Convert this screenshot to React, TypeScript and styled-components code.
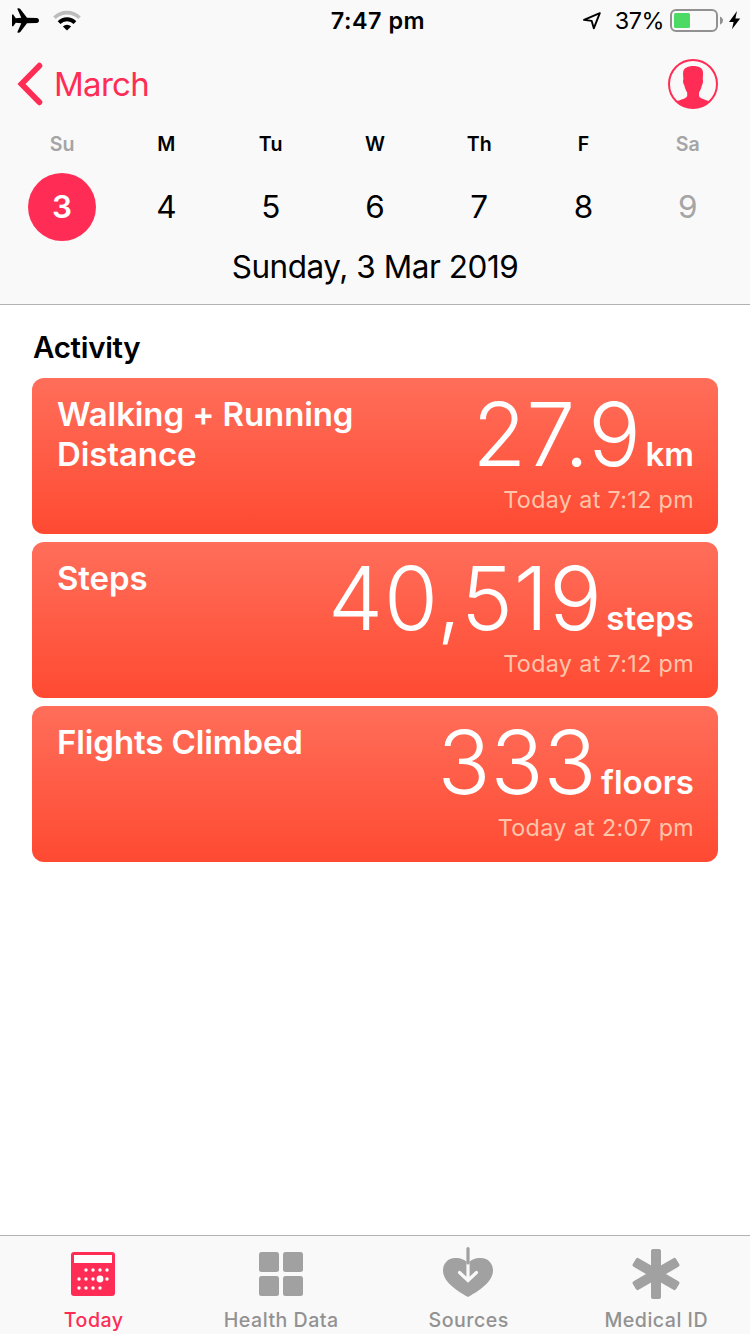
import React from "react";
import styled, { createGlobalStyle } from "styled-components";

const PINK = "#ff2d55";
const GREY = "#a1a1a1";

const GlobalStyle = createGlobalStyle`
  * { box-sizing: border-box; }
  body { margin: 0; background: #fff; }
  svg { display: block; flex: none; }
`;

const Screen = styled.div`
  width: 750px;
  height: 1334px;
  display: flex;
  flex-direction: column;
  overflow: hidden;
  background: #fff;
  color: #000;
  font-family: Inter, "Liberation Sans", sans-serif;
  white-space: nowrap;
`;

const Header = styled.header`
  height: 305px;
  flex: none;
  display: flex;
  flex-direction: column;
  background: #f9f9f9;
  border-bottom: 1px solid #b2b2b2;
`;

const StatusBar = styled.div`
  height: 40px;
  display: grid;
  grid-template-columns: 1fr auto 1fr;
  align-items: center;
`;

const StatusLeft = styled.div`
  display: flex;
  align-items: center;
  gap: 13px;
  padding-left: 12px;
`;

const Clock = styled.div`
  font-size: 23.4px;
  font-weight: 600;
  line-height: 40px;
  letter-spacing: 0.5px;
  padding: 1px 0 0 6px;
`;

const StatusRight = styled.div`
  display: flex;
  justify-content: flex-end;
  align-items: center;
  padding-right: 9px;
`;

const Percent = styled.span`
  font-size: 23.4px;
  line-height: 40px;
  letter-spacing: -0.5px;
  margin: 1px 6px 0 13px;
`;

const NavBar = styled.div`
  height: 88px;
  display: flex;
  align-items: center;
  justify-content: space-between;
  padding: 0 32px 0 16px;
`;

const BackButton = styled.button`
  display: flex;
  align-items: center;
  gap: 10px;
  padding: 0;
  border: 0;
  background: none;
  color: ${PINK};
  font: 400 33px/44px Inter, "Liberation Sans", sans-serif;
  letter-spacing: -0.7px;
`;

const Week = styled.div`
  display: grid;
  grid-template-columns: repeat(7, 1fr);
  padding: 0 10px;
`;

const Day = styled.div<{ $muted?: boolean }>`
  display: flex;
  flex-direction: column;
  align-items: center;
  color: ${(p) => (p.$muted ? "#a5a5a5" : "#000")};
`;

const DayName = styled.span`
  font-size: 19.6px;
  font-weight: 600;
  line-height: 33px;
  letter-spacing: 0.1px;
  margin-bottom: 12px;
`;

const DayNumber = styled.span<{ $selected?: boolean }>`
  width: 68px;
  height: 68px;
  border-radius: 50%;
  text-align: center;
  font-size: 31.5px;
  line-height: 68px;
  font-weight: ${(p) => (p.$selected ? 600 : 400)};
  color: ${(p) => (p.$selected ? "#fff" : "inherit")};
  background: ${(p) => (p.$selected ? PINK : "transparent")};
`;

const FullDate = styled.div`
  text-align: center;
  font-size: 31.5px;
  line-height: 40px;
  letter-spacing: -0.45px;
  margin-top: 6px;
`;

const Content = styled.main`
  flex: 1;
  padding: 22px 32px 0;
`;

const SectionTitle = styled.h2`
  margin: 0 0 11px 1px;
  font-size: 29.5px;
  font-weight: 600;
  line-height: 40px;
  letter-spacing: -0.3px;
`;

const CardList = styled.div`
  display: flex;
  flex-direction: column;
  gap: 8px;
`;

const Card = styled.article`
  height: 156px;
  border-radius: 12px;
  padding: 16px 24px 0 25px;
  display: flex;
  justify-content: space-between;
  color: #fff;
  background: linear-gradient(#ff6e5a, #ff4a32);
`;

const CardTitle = styled.h3`
  margin: 0;
  width: 310px;
  font-size: 33px;
  font-weight: 600;
  line-height: 40px;
  letter-spacing: -0.1px;
  white-space: normal;
`;

const Reading = styled.div`
  display: flex;
  flex-direction: column;
  align-items: flex-end;
`;

const Measure = styled.div`
  display: flex;
  align-items: baseline;
  gap: 4.5px;
  height: 80px;
  line-height: 80px;
`;

const Amount = styled.span<{ $tracking: number }>`
  font-size: 87.5px;
  font-weight: 270;
  letter-spacing: ${(p) => p.$tracking}px;
  margin-right: ${(p) => -p.$tracking}px;
`;

const Unit = styled.span`
  font-size: 33px;
  font-weight: 600;
`;

const Timestamp = styled.div`
  font-size: 23.3px;
  line-height: 30px;
  letter-spacing: 0.35px;
  margin-top: 11px;
  color: #ffc5ab;
`;

const TabBar = styled.nav`
  height: 99px;
  flex: none;
  display: grid;
  grid-template-columns: repeat(4, 1fr);
  background: #f9f9f9;
  border-top: 1px solid #b2b2b2;
`;

const Tab = styled.div<{ $active?: boolean }>`
  display: flex;
  flex-direction: column;
  align-items: center;
  padding-top: 11px;
  gap: 9px;
  font-size: 19.6px;
  font-weight: 500;
  line-height: 24px;
  letter-spacing: 0.5px;
  color: ${(p) => (p.$active ? PINK : "#929292")};
`;

const AirplaneIcon = () => (
  <svg width="28" height="26" viewBox="12 7 28 26">
    <path d="M36.6 17C38 17 39 18.2 39 19.5S38 22 36.6 22L27 22.2L20.3 31C19.8 31.6 19 31.9 17.7 31.7L17.4 31L21.3 22.2L15.8 21.8L13.2 25.2H12V13.6H13.2L15.8 17.2L21.3 16.8L17.4 8L17.7 7.3C19 7.1 19.8 7.4 20.3 8L27 16.8Z" />
  </svg>
);

const WifiIcon = () => (
  <svg width="28" height="22" viewBox="53 9 28 22">
    <path d="M54.5 16.8A17.7 17.7 0 0 1 79.5 16.8" fill="none" stroke="#bcbcbc" strokeWidth="3.6" />
    <path d="M59.08 21.58A11.2 11.2 0 0 1 74.92 21.58" fill="none" stroke="#000" strokeWidth="3.9" />
    <path d="M67 29.5L62.9 25.4A5.8 5.8 0 0 1 71.1 25.4Z" />
  </svg>
);

const LocationIcon = () => (
  <svg width="20" height="20" viewBox="582.5 11 20 20">
    <path d="M600.3 13.1L584.5 19.9L592.2 20.9L594.3 28.3Z" fill="none" stroke="#000" strokeWidth="1.9" strokeLinejoin="round" />
  </svg>
);

const BatteryIcon = () => (
  <svg width="71" height="24" viewBox="670 9 71 24">
    <rect x="671" y="10" width="46" height="21" rx="5" fill="none" stroke="#919191" strokeWidth="2" />
    <rect x="674" y="13" width="16" height="15" rx="1.5" fill="#4cd964" />
    <path d="M720 16.5Q723 17.8 723 20.6T720 24.8Z" fill="#919191" />
    <path d="M737 11L729 21.9H733.6L732 29.2L740.2 18.6H735.4Z" />
  </svg>
);

const ChevronIcon = () => (
  <svg width="28" height="46" viewBox="16 61 28 46">
    <path d="M39.4 65.7L21.5 84L39.4 102.3" fill="none" stroke={PINK} strokeWidth="5.8" strokeLinecap="round" />
  </svg>
);

const ProfileIcon = () => (
  <svg width="50" height="50" viewBox="668 59 50 50">
    <circle cx="693" cy="84" r="24" fill="none" stroke={PINK} strokeWidth="2" />
    <path
      fill={PINK}
      d="M683.4 79C682.6 71.5 683 69.500 686 67.800C689.500 65.600 696.500 65.500 700 67.600C703 69.200 703.500 71.500 702.700 79C703.500 80.500 702.900 84 702 85C701.200 88.500 700 91 699 92.5V96C700.500 99 704.500 99.300 710 101.500A24.500 24.500 0 0 1 676 101.500C681.500 99.300 685.700 99 687.200 96V92.500C686.200 91 685 88.500 684.200 85C683.200 84 682.600 80.500 683.400 79Z"
    />
  </svg>
);

const calendarDots = [
  [86, 1270], [93, 1270], [100, 1270], [107, 1270],
  [79, 1279], [86, 1279], [93, 1279], [107, 1279],
  [79, 1288], [86, 1288], [93, 1288], [100, 1288],
];

const CalendarIcon = () => (
  <svg width="53" height="52" viewBox="67 1247 53 52">
    <rect x="71" y="1252" width="44" height="44" rx="3" fill={PINK} />
    <rect x="74" y="1255" width="38" height="8" fill="#fff" />
    {calendarDots.map(([x, y]) => (
      <circle key={`${x}-${y}`} cx={x} cy={y} r="1.7" fill="#fff" />
    ))}
    <circle cx="100" cy="1279" r="3.4" fill="#fff" />
  </svg>
);

const GridIcon = () => (
  <svg width="53" height="52" viewBox="0 0 53 52" fill={GREY}>
    <rect x="4" y="5" width="20" height="20" rx="2.5" />
    <rect x="28" y="5" width="20" height="20" rx="2.5" />
    <rect x="4" y="29" width="20" height="20" rx="2.5" />
    <rect x="28" y="29" width="20" height="20" rx="2.5" />
  </svg>
);

const SourcesIcon = () => (
  <svg width="53" height="52" viewBox="0 0 53 52">
    <path
      fill={GREY}
      d="M26 50C20 46.5 1 36.5 1 23.5C1 16.5 6 11 13 11C19 11 24 13 26 16.5C28 13 33 11 39 11C46 11 51 16.5 51 23.5C51 36.5 32 46.5 26 50Z"
    />
    <path d="M26 16V33M17.5 25.5L26 33.5L34.5 25.5" fill="none" stroke="#f9f9f9" strokeWidth="3.2" strokeLinecap="round" />
    <path d="M26 1.6V16" stroke={GREY} strokeWidth="3.2" strokeLinecap="round" />
  </svg>
);

const AsteriskIcon = () => (
  <svg width="53" height="52" viewBox="0 0 53 52" fill={GREY}>
    {[0, 60, 120].map((angle) => (
      <rect key={angle} x="21" y="2" width="10" height="50" rx="2" transform={`rotate(${angle} 26 27)`} />
    ))}
  </svg>
);

const week = [
  { name: "Su", date: 3, muted: true, selected: true },
  { name: "M", date: 4 },
  { name: "Tu", date: 5 },
  { name: "W", date: 6 },
  { name: "Th", date: 7 },
  { name: "F", date: 8 },
  { name: "Sa", date: 9, muted: true },
];

const activities = [
  { title: "Walking + Running Distance", amount: "27.9", tracking: 0, unit: "km", time: "Today at 7:12 pm" },
  { title: "Steps", amount: "40,519", tracking: 0.9, unit: "steps", time: "Today at 7:12 pm" },
  { title: "Flights Climbed", amount: "333", tracking: 0, unit: "floors", time: "Today at 2:07 pm" },
];

const tabs = [
  { label: "Today", Icon: CalendarIcon, active: true },
  { label: "Health Data", Icon: GridIcon },
  { label: "Sources", Icon: SourcesIcon },
  { label: "Medical ID", Icon: AsteriskIcon },
];

export default function App() {
  return (
    <Screen>
      <GlobalStyle />
      <Header>
        <StatusBar>
          <StatusLeft>
            <AirplaneIcon />
            <WifiIcon />
          </StatusLeft>
          <Clock>7:47 pm</Clock>
          <StatusRight>
            <LocationIcon />
            <Percent>37%</Percent>
            <BatteryIcon />
          </StatusRight>
        </StatusBar>
        <NavBar>
          <BackButton>
            <ChevronIcon />
            March
          </BackButton>
          <ProfileIcon />
        </NavBar>
        <Week>
          {week.map((d) => (
            <Day key={d.name} $muted={d.muted}>
              <DayName>{d.name}</DayName>
              <DayNumber $selected={d.selected}>{d.date}</DayNumber>
            </Day>
          ))}
        </Week>
        <FullDate>Sunday, 3 Mar 2019</FullDate>
      </Header>
      <Content>
        <SectionTitle>Activity</SectionTitle>
        <CardList>
          {activities.map((a) => (
            <Card key={a.title}>
              <CardTitle>{a.title}</CardTitle>
              <Reading>
                <Measure>
                  <Amount $tracking={a.tracking}>{a.amount}</Amount>
                  <Unit>{a.unit}</Unit>
                </Measure>
                <Timestamp>{a.time}</Timestamp>
              </Reading>
            </Card>
          ))}
        </CardList>
      </Content>
      <TabBar>
        {tabs.map(({ label, Icon, active }) => (
          <Tab key={label} $active={active}>
            <Icon />
            {label}
          </Tab>
        ))}
      </TabBar>
    </Screen>
  );
}
